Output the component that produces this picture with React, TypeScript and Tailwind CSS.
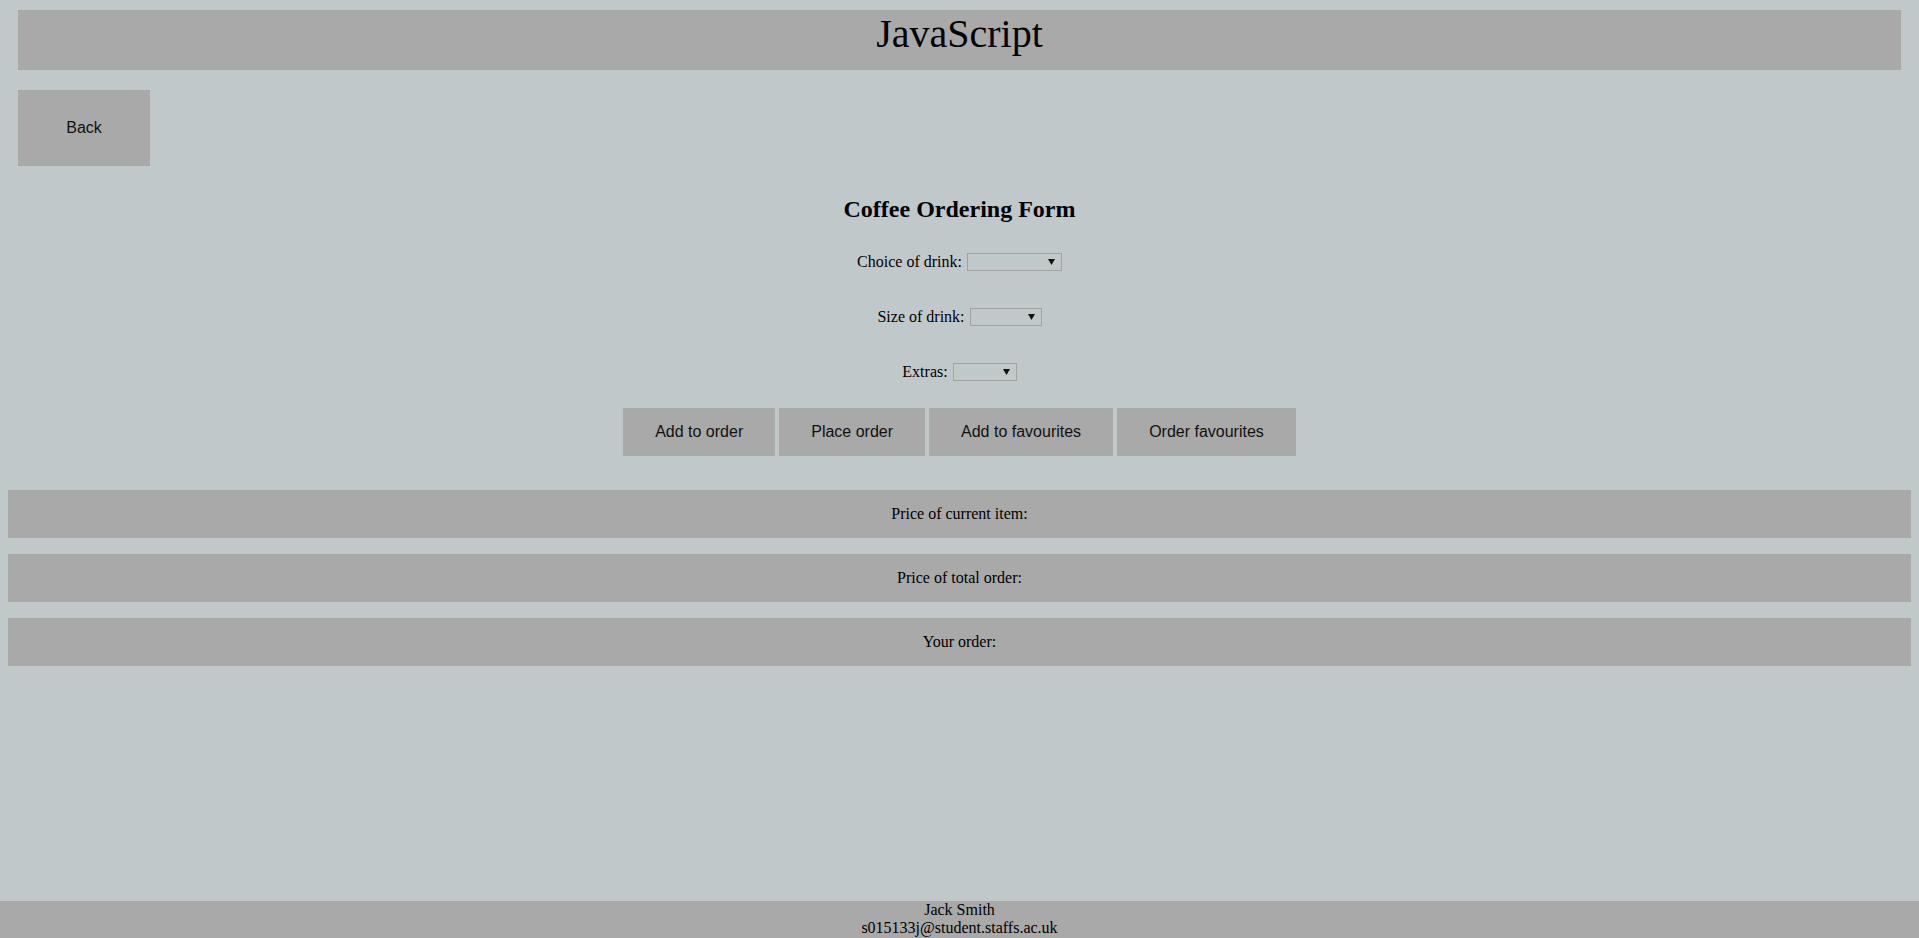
import type { ReactNode } from "react";

const SERIF = "font-['Liberation_Serif','Times_New_Roman',serif]";
const SANS = "font-['Liberation_Sans',Arial,sans-serif]";

function DropDown({ width }: { width: string }) {
  return (
    <span className={`grid h-[18px] ${width}`}>
      <select className="col-start-1 row-start-1 h-[18px] w-full appearance-none border border-[#a2a2a2] bg-transparent outline-none" />
      <span className="pointer-events-none col-start-1 row-start-1 flex items-center justify-end pr-[7px]">
        <svg width="7" height="6" viewBox="0 0 7 6">
          <path d="M0 0 L7 0 L3.5 6 Z" fill="#111" />
        </svg>
      </span>
    </span>
  );
}

function FormRow({ label, width }: { label: string; width: string }) {
  return (
    <div className="flex h-[18px] items-center justify-center gap-[5px] text-[16px] leading-[18px]">
      <label>{label}</label>
      <DropDown width={width} />
    </div>
  );
}

function ActionButton({ children }: { children: ReactNode }) {
  return (
    <button
      className={`${SANS} bg-[#a9a9a9] px-8 py-[15px] text-[16px] leading-[18px] text-[#111] cursor-pointer`}
    >
      {children}
    </button>
  );
}

function InfoBar({ text }: { text: string }) {
  return (
    <div className="mx-2 flex h-[48px] items-center justify-center bg-[#a9a9a9] text-[16px]">
      {text}
    </div>
  );
}

export default function App() {
  return (
    <div className={`${SERIF} flex min-h-screen flex-col bg-[#c1c8ca] text-black`}>
      <header className="mx-[18px] mt-[10px] h-[60px] bg-[#a9a9a9] pt-[2px] text-center text-[40px] leading-[44px]">
        JavaScript
      </header>

      <div className="ml-[18px] mt-[20px]">
        <button
          className={`${SANS} flex h-[76px] w-[132px] items-center justify-center bg-[#a9a9a9] text-[16px] text-[#111] cursor-pointer`}
        >
          Back
        </button>
      </div>

      <h2 className="mt-[29px] text-center text-[24px] font-bold leading-[28px]">
        Coffee Ordering Form
      </h2>

      <div className="mt-[30px] flex flex-col gap-[37px]">
        <FormRow label="Choice of drink:" width="w-[95px]" />
        <FormRow label="Size of drink:" width="w-[72px]" />
        <FormRow label="Extras:" width="w-[64px]" />
      </div>

      <div className="mt-[27px] flex justify-center gap-[4px]">
        <ActionButton>Add to order</ActionButton>
        <ActionButton>Place order</ActionButton>
        <ActionButton>Add to favourites</ActionButton>
        <ActionButton>Order favourites</ActionButton>
      </div>

      <div className="mt-[34px] flex flex-col gap-4">
        <InfoBar text="Price of current item:" />
        <InfoBar text="Price of total order:" />
        <InfoBar text="Your order:" />
      </div>

      <footer className="mt-auto h-[37px] bg-[#a9a9a9] text-center text-[16px] leading-[18px]">
        <p>Jack Smith</p>
        <p>s015133j@student.staffs.ac.uk</p>
      </footer>
    </div>
  );
}
